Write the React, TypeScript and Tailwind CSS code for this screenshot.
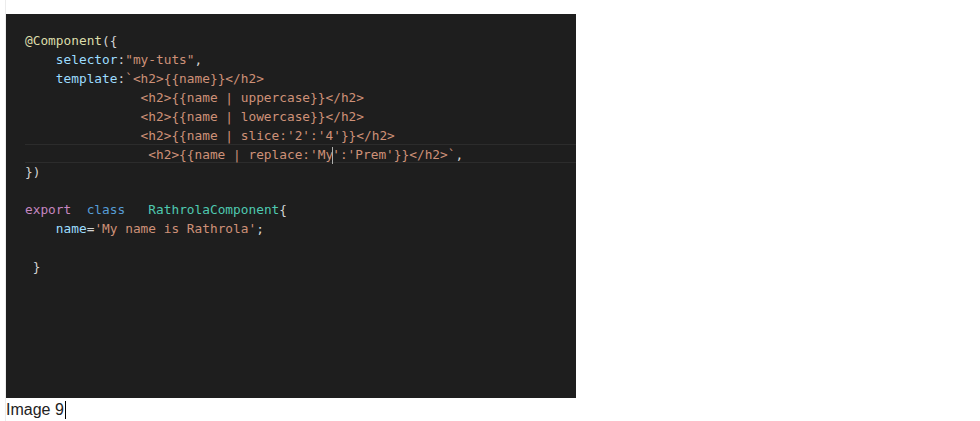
const C = {
  dec: 'text-[#dcdcaa]',
  prop: 'text-[#9cdcfe]',
  str: 'text-[#ce9178]',
  punc: 'text-[#d4d4d4]',
  kw: 'text-[#c586c0]',
  cls: 'text-[#569cd6]',
  type: 'text-[#4ec9b0]',
};

type Tok = [string, string];

const lines: Tok[][] = [
  [['@Component', C.dec], ['({', C.punc]],
  [['    ', ''], ['selector', C.prop], [':', C.punc], ['"my-tuts"', C.str], [',', C.punc]],
  [['    ', ''], ['template', C.prop], [':', C.punc], ['`<h2>{{name}}</h2>', C.str]],
  [['               ', ''], ['<h2>{{name | uppercase}}</h2>', C.str]],
  [['               ', ''], ['<h2>{{name | lowercase}}</h2>', C.str]],
  [['               ', ''], ['<h2>{{name | slice:\'2\':\'4\'}}</h2>', C.str]],
  [['                ', ''], ["<h2>{{name | replace:'My", C.str], ['|cursor', ''], ["':'Prem'}}</h2>`", C.str], [',', C.punc]],
  [['})', C.punc]],
  [],
  [['export', C.kw], ['  ', ''], ['class', C.cls], ['   ', ''], ['RathrolaComponent', C.type], ['{', C.punc]],
  [['    ', ''], ['name', C.prop], ['=', C.punc], ["'My name is Rathrola'", C.str], [';', C.punc]],
  [],
  [[' ', ''], ['}', C.punc]],
];

export default function App() {
  return (
    <div className="w-[980px] h-[421px] bg-white font-['Liberation_Sans',Arial,sans-serif]">
      <div className="ml-[5px] h-full border-l border-[#ececec] pt-[14px]">
        <div className="w-[570px] h-[384px] bg-[#1e1e1e] pt-[17px] pl-[19px] overflow-hidden font-['DejaVu_Sans_Mono','Liberation_Mono',monospace] text-[12.8px] leading-[19px] whitespace-pre">
          {lines.map((line, i) => (
            <div
              key={i}
              className={i === 6 ? 'h-[19px] -my-px border-y border-[#2c2c2c]' : 'h-[19px]'}
            >
              {line.map(([t, c], j) =>
                t === '|cursor' ? (
                  <span key={j} className="inline-block w-px h-[17px] bg-[#aeafad] align-middle -mx-px relative" />
                ) : (
                  <span key={j} className={c}>
                    {t}
                  </span>
                )
              )}
            </div>
          ))}
        </div>
        <div className="h-[23px] flex items-center text-[16px] text-[#222] leading-none">
          Image 9<span className="inline-block w-px h-[18px] bg-black ml-px" />
        </div>
      </div>
    </div>
  );
}
